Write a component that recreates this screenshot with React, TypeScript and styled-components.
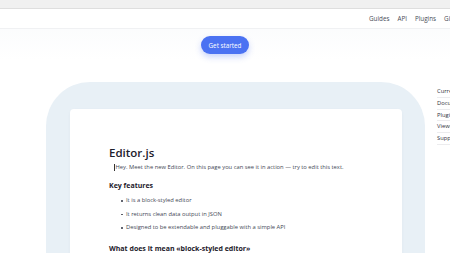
import styled, { createGlobalStyle } from 'styled-components';

const GlobalStyle = createGlobalStyle`
    html, body {
        margin: 0;
        padding: 0;
        width: 450px;
        height: 253px;
        overflow: hidden;
        background: #ffffff;
        font-family: 'Open Sans', 'Noto Sans', sans-serif;
    }
`;

const navLinks = ['Guides', 'API', 'Plugins', 'GitHub'];
const sideLinks = ['Current version', 'Documentation', 'Plugins', 'Viewer', 'Support'];
const features = [
    'It is a block-styled editor',
    'It returns clean data output in JSON',
    'Designed to be extendable and pluggable with a simple API',
];

function App() {
    return (
        <Page>
            <GlobalStyle />
            <BrowserBar />
            <Header>
                <Nav>
                    {navLinks.map((l) => (
                        <NavLink key={l}>{l}</NavLink>
                    ))}
                </Nav>
            </Header>
            <Hero>
                <StartButton>Get started</StartButton>
            </Hero>
            <Main>
                <Panel>
                    <Card>
                        <Title>Editor.js</Title>
                        <Paragraph>
                            <Caret />
                            Hey. Meet the new Editor. On this page you can see it in action — try to edit this text.
                        </Paragraph>
                        <SubTitle>Key features</SubTitle>
                        <List>
                            {features.map((f) => (
                                <Item key={f}>{f}</Item>
                            ))}
                        </List>
                        <SubTitle $top={8}>What does it mean «block-styled editor»</SubTitle>
                    </Card>
                </Panel>
                <Sidebar>
                    {sideLinks.map((l) => (
                        <SideLink key={l}>{l}</SideLink>
                    ))}
                </Sidebar>
            </Main>
        </Page>
    );
}

export default App;

const Page = styled.div`
    width: 450px;
    height: 253px;
    overflow: hidden;
    background: linear-gradient(#f8f9fb, #ffffff 60px);
`;

const BrowserBar = styled.div`
    height: 8px;
    background: #f0f0f0;
    border-bottom: 1px solid #dedede;
`;

const Header = styled.header`
    height: 19px;
    background: #ffffff;
    border-bottom: 1px solid #f0f1f3;
    display: flex;
    align-items: center;
    padding-left: 369px;
    white-space: nowrap;
`;

const Nav = styled.nav`
    display: flex;
    gap: 8px;
`;

const NavLink = styled.a`
    font-size: 6.3px;
    color: #4a4d57;
`;

const Hero = styled.div`
    display: flex;
    justify-content: center;
    padding-top: 7px;
`;

const StartButton = styled.button`
    width: 48px;
    height: 18px;
    border: none;
    border-radius: 9px;
    background: #4b72f2;
    color: #ffffff;
    font-family: inherit;
    font-size: 6.3px;
    padding: 0;
    box-shadow: 0 3px 6px rgba(75, 114, 242, 0.3);
`;

const Main = styled.main`
    display: flex;
    align-items: flex-start;
    gap: 12px;
    padding-left: 46px;
    margin-top: 28px;
`;

const Panel = styled.section`
    flex: 0 0 379px;
    height: 200px;
    background: #e8f0f6;
    border-radius: 44px 44px 0 0;
    padding: 27px 23px 0 24px;
    box-sizing: border-box;
`;

const Card = styled.div`
    height: 100%;
    background: #ffffff;
    border-radius: 4px 4px 0 0;
    box-shadow: 0 1px 3px rgba(100, 120, 140, 0.06);
    padding: 36px 20px 0 39px;
    box-sizing: border-box;
    color: #3a3d48;
`;

const Title = styled.h1`
    margin: 0;
    font-size: 11.5px;
    font-weight: 600;
    color: #1d202b;
    line-height: 16px;
`;

const Paragraph = styled.p`
    margin: 0;
    padding-left: 5px;
    font-size: 5.8px;
    line-height: 12px;
    color: #444855;
    display: flex;
    align-items: center;
`;

const Caret = styled.span`
    display: inline-block;
    width: 0.5px;
    height: 7px;
    background: #333;
    margin-right: 1px;
`;

const SubTitle = styled.h2<{ $top?: number }>`
    margin: ${(p) => p.$top ?? 7}px 0 0;
    font-size: 7px;
    font-weight: 700;
    color: #1d202b;
    line-height: 12px;
`;

const List = styled.ul`
    margin: 2px 0 0;
    padding-left: 17px;
    list-style: none;
`;

const Item = styled.li`
    position: relative;
    font-size: 5.8px;
    line-height: 13.5px;
    color: #444855;

    &::before {
        content: '';
        position: absolute;
        left: -5px;
        top: 6px;
        width: 1.6px;
        height: 1.6px;
        border-radius: 50%;
        background: #444855;
    }
`;

const Sidebar = styled.aside`
    display: flex;
    flex-direction: column;
    margin-top: 4px;
    white-space: nowrap;
`;

const SideLink = styled.a`
    font-size: 5.8px;
    line-height: 10.8px;
    color: #2f323c;
    border-bottom: 0.7px solid #ececee;
`;
